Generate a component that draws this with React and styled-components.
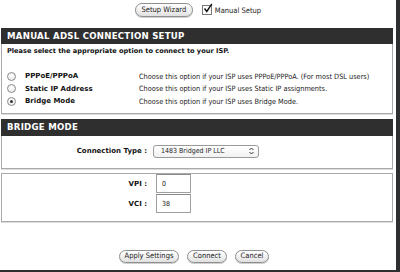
import React from "react";
import styled, { createGlobalStyle } from "styled-components";

const Global = createGlobalStyle`
  html, body {
    margin: 0;
    padding: 0;
    background: #2d2f31;
  }
  body {
    font-family: "DejaVu Sans", Verdana, sans-serif;
  }
`;

const Page = styled.div`
  width: 396px;
  height: 270px;
  background: #ffffff;
  display: flex;
  flex-direction: column;
  overflow: hidden;
`;

const TopBar = styled.div`
  height: 14px;
  padding-top: 3px;
  margin-bottom: 11px;
  display: flex;
  align-items: center;
  justify-content: center;
  gap: 9px;
`;

const PillButton = styled.button`
  height: ${(p) => p.$h || 14}px;
  width: ${(p) => p.$w}px;
  padding: 0;
  border: 1px solid #8e8e8e;
  border-radius: 8px;
  background: linear-gradient(#ffffff, #f0f0f0 55%, #e0e0e0);
  box-shadow: 0 1px 0 #d0d0d0;
  font-family: "DejaVu Sans Condensed", "DejaVu Sans", sans-serif;
  font-stretch: condensed;
  font-size: 7.5px;
  color: #1a1a1a;
  line-height: 1;
  white-space: nowrap;
  display: flex;
  align-items: center;
  justify-content: center;
`;

const CheckWrap = styled.label`
  display: flex;
  align-items: center;
  gap: 3px;
  font-family: "DejaVu Sans Condensed", "DejaVu Sans", sans-serif;
  font-stretch: condensed;
  font-size: 7.5px;
  color: #222;
  white-space: nowrap;
`;

const Box = styled.span`
  width: 8px;
  height: 8px;
  border: 1px solid #7a7a7a;
  background: #fff;
  position: relative;
  display: inline-block;
`;

const Panel = styled.section`
  width: 390px;
  margin-left: 1px;
  margin-top: ${(p) => p.$mt || 0}px;
  border: 1px solid #a9a9a9;
  box-shadow: 0 1px 0 #dcdcdc;
  background: #fff;
`;

const Header = styled.div`
  margin: -1px -1px 0;
  height: ${(p) => p.$h}px;
  background: #2f2f2f;
  color: #ffffff;
  font-family: "DejaVu Sans", Verdana, sans-serif;
  font-weight: bold;
  font-size: 8.6px;
  letter-spacing: 0.25px;
  display: flex;
  align-items: center;
  padding-left: 6px;
`;

const Intro = styled.div`
  font-weight: bold;
  font-size: 6.6px;
  color: #111;
  padding: 2px 0 0 5px;
  height: 10px;
  line-height: 10px;
`;

const Options = styled.div`
  padding: 14px 0 5px 5px;
  display: flex;
  flex-direction: column;
`;

const OptionRow = styled.div`
  height: 12.5px;
  display: grid;
  grid-template-columns: 8px 104px 1fr;
  column-gap: 10px;
  align-items: center;
`;

const Radio = styled.span`
  width: 7px;
  height: 7px;
  border-radius: 50%;
  border: 1px solid #8a8a8a;
  background: radial-gradient(circle at 50% 35%, #ffffff, #e6e6e6);
  display: flex;
  align-items: center;
  justify-content: center;
  &::after {
    content: "";
    width: 3px;
    height: 3px;
    border-radius: 50%;
    background: ${(p) => (p.$on ? "#333" : "transparent")};
  }
`;

const OptLabel = styled.span`
  font-weight: bold;
  font-size: 7px;
  color: #111;
  white-space: nowrap;
`;

const OptDesc = styled.span`
  font-family: "DejaVu Sans Condensed", "DejaVu Sans", sans-serif;
  font-stretch: condensed;
  font-size: 7.3px;
  color: #222;
  white-space: nowrap;
`;

const FieldBody = styled.div`
  padding: ${(p) => p.$pad};
  display: flex;
  flex-direction: column;
  gap: ${(p) => p.$gap || 0}px;
`;

const Field = styled.div`
  display: flex;
  align-items: center;
  height: ${(p) => p.$h}px;
`;

const FieldLabel = styled.span`
  width: 145px;
  text-align: right;
  font-weight: bold;
  font-size: 7px;
  color: #111;
  margin-right: ${(p) => p.$gap}px;
  white-space: nowrap;
`;

const Select = styled.div`
  width: 93px;
  height: 11px;
  border: 1px solid #9a9a9a;
  border-radius: 3px;
  background: linear-gradient(#ffffff, #f1f1f1);
  display: flex;
  align-items: center;
  justify-content: space-between;
  padding: 0 4px 0 7px;
  font-family: "DejaVu Sans Condensed", "DejaVu Sans", sans-serif;
  font-stretch: condensed;
  font-size: 7px;
  color: #222;
  white-space: nowrap;
`;

const TextBox = styled.div`
  width: 28px;
  height: 17px;
  border: 1px solid #a0a0a0;
  border-top-color: #8a8a8a;
  padding-left: 5px;
  display: flex;
  align-items: center;
  font-family: "DejaVu Sans Condensed", "DejaVu Sans", sans-serif;
  font-stretch: condensed;
  font-size: 7px;
  color: #222;
`;

const ActionBar = styled.div`
  margin-top: 28px;
  display: flex;
  justify-content: center;
  gap: 8px;
  padding-right: 8px;
`;

const options = [
  {
    label: "PPPoE/PPPoA",
    desc: "Choose this option if your ISP uses PPPoE/PPPoA. (For most DSL users)",
  },
  {
    label: "Static IP Address",
    desc: "Choose this option if your ISP uses Static IP assignments.",
  },
  {
    label: "Bridge Mode",
    desc: "Choose this option if your ISP uses Bridge Mode.",
    on: true,
  },
];

export default function App() {
  return (
    <>
      <Global />
      <Page>
        <TopBar>
          <PillButton $w={58}>Setup Wizard</PillButton>
          <CheckWrap>
            <Box>
              <svg
                width="10"
                height="10"
                viewBox="0 0 10 10"
                style={{ position: "absolute", left: 0, top: -3 }}
              >
                <path d="M1.5 5.5 L3.8 8.5 L8.8 0.8" fill="none" stroke="#111" strokeWidth="1.4" />
              </svg>
            </Box>
            Manual Setup
          </CheckWrap>
        </TopBar>

        <Panel>
          <Header $h={16}>MANUAL ADSL CONNECTION SETUP</Header>
          <Intro>Please select the appropriate option to connect to your ISP.</Intro>
          <Options>
            {options.map((o) => (
              <OptionRow key={o.label}>
                <Radio $on={o.on} />
                <OptLabel>{o.label}</OptLabel>
                <OptDesc>{o.desc}</OptDesc>
              </OptionRow>
            ))}
          </Options>
        </Panel>

        <Panel $mt={5}>
          <Header $h={17}>BRIDGE MODE</Header>
          <FieldBody $pad="9px 0 10px">
            <Field $h={13}>
              <FieldLabel $gap={6}>Connection Type :</FieldLabel>
              <Select>
                <span>1483 Bridged IP LLC</span>
                <svg width="5" height="8" viewBox="0 0 5 8">
                  <path d="M0.5 3 L2.5 1 L4.5 3 M0.5 5 L2.5 7 L4.5 5" fill="none" stroke="#333" strokeWidth="1" />
                </svg>
              </Select>
            </Field>
          </FieldBody>
        </Panel>

        <Panel $mt={4}>
          <FieldBody $pad="1px 0 8px" $gap={2}>
            <Field $h={18}>
              <FieldLabel $gap={9}>VPI :</FieldLabel>
              <TextBox>0</TextBox>
            </Field>
            <Field $h={18}>
              <FieldLabel $gap={9}>VCI :</FieldLabel>
              <TextBox>38</TextBox>
            </Field>
          </FieldBody>
        </Panel>

        <ActionBar>
          <PillButton $w={60} $h={13}>Apply Settings</PillButton>
          <PillButton $w={40} $h={13}>Connect</PillButton>
          <PillButton $w={34} $h={13}>Cancel</PillButton>
        </ActionBar>
      </Page>
    </>
  );
}
